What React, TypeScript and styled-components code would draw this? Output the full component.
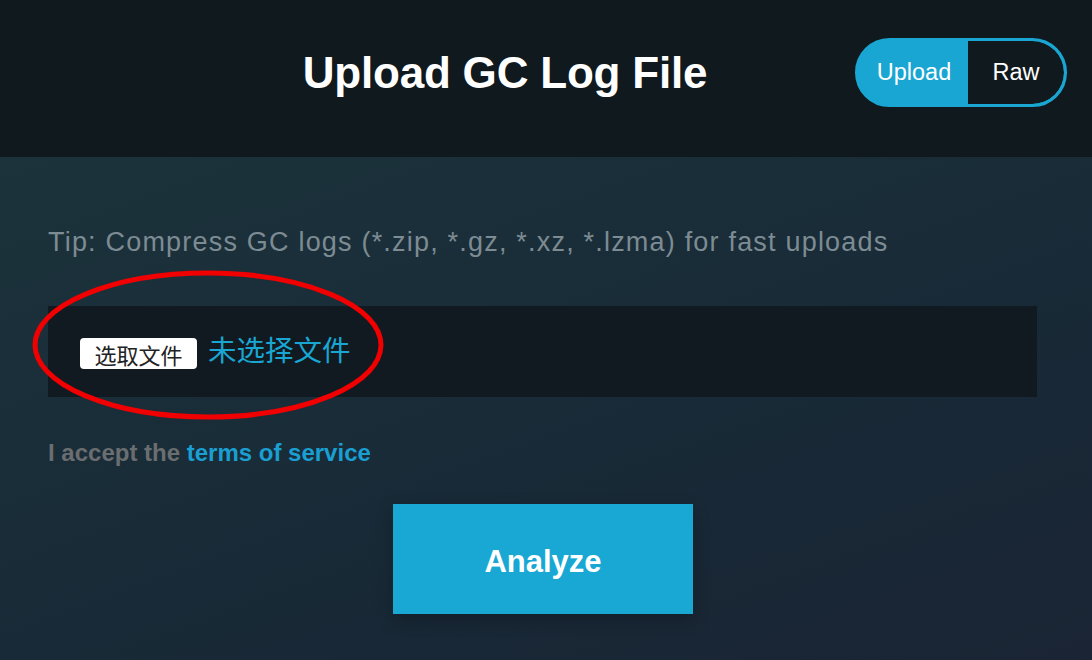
import React from "react";
import styled, { createGlobalStyle } from "styled-components";

const Global = createGlobalStyle`
  html, body { margin: 0; padding: 0; }
  body {
    width: 1092px;
    height: 660px;
    overflow: hidden;
    font-family: "Liberation Sans", Arial, sans-serif;
    background: #10191e;
  }
`;

const Page = styled.div`
  width: 1092px;
  height: 660px;
  display: flex;
  flex-direction: column;
`;

const Header = styled.header`
  height: 157px;
  flex: none;
  background: #10191e;
  display: grid;
  grid-template-columns: 1fr auto 1fr;
  align-items: center;
`;

const Title = styled.h1`
  grid-column: 2;
  margin: 0 0 12px 0;
  font-size: 44px;
  font-weight: 700;
  color: #ffffff;
  letter-spacing: -0.2px;
  transform: translateX(-41px);
`;

const ToggleWrap = styled.div`
  grid-column: 3;
  justify-self: end;
  margin-right: 25px;
  margin-bottom: 13px;
  display: flex;
  height: 63px;
  border: 3px solid #19a6d3;
  border-radius: 36px;
  overflow: hidden;
  background: #19a6d3;
`;

const ToggleItem = styled.div<{ $active?: boolean }>`
  width: ${(p) => (p.$active ? "108px" : "96px")};
  display: flex;
  align-items: center;
  justify-content: center;
  font-size: 23.5px;
  color: #ffffff;
  background: ${(p) => (p.$active ? "#19a6d3" : "#10191e")};
  border-radius: ${(p) => (p.$active ? "0" : "0 33px 33px 0")};
  padding-left: ${(p) => (p.$active ? "2px" : "0")};
`;

const Body = styled.main`
  flex: 1;
  background: linear-gradient(160deg, #1c333b 0%, #182a37 55%, #1a2434 100%);
  padding: 0 55px 0 48px;
  display: flex;
  flex-direction: column;
`;

const Tip = styled.p`
  margin: 67px 0 0 0;
  font-size: 27px;
  line-height: 37px;
  letter-spacing: 1.2px;
  color: #7d8b93;
`;

const FileArea = styled.div`
  position: relative;
  margin-top: 45px;
  height: 91px;
  background: #111a20;
  display: flex;
  align-items: center;
  padding-left: 32px;
  gap: 11px;
`;

const ChooseButton = styled.span`
  display: inline-flex;
  align-items: center;
  justify-content: center;
  width: 117px;
  height: 31px;
  margin-top: 4px;
  background: #ffffff;
  border-radius: 4px;
  font-family: "Noto Sans CJK SC", sans-serif;
  font-size: 22px;
  color: #222222;
`;

const NoFile = styled.span`
  font-family: "Noto Sans CJK SC", sans-serif;
  font-size: 28.5px;
  color: #19a6d3;
  margin-top: -6px;
`;

const Ellipse = styled.svg`
  position: absolute;
  left: -17px;
  top: -37px;
  width: 354px;
  height: 152px;
  overflow: visible;
  pointer-events: none;
`;

const Terms = styled.p`
  margin: 42px 0 0 0;
  font-size: 24px;
  font-weight: 700;
  color: #6b6e70;
`;

const TermsLink = styled.a`
  color: #1a9fd2;
  text-decoration: none;
`;

const AnalyzeRow = styled.div`
  display: flex;
  justify-content: center;
  margin-top: 37px;
  padding-left: 1px;
`;

const AnalyzeButton = styled.button`
  width: 300px;
  height: 110px;
  border: none;
  background: #19a7d4;
  color: #ffffff;
  font-family: "Liberation Sans", Arial, sans-serif;
  font-size: 31px;
  font-weight: 700;
  padding-top: 6px;
  box-shadow: 0 6px 16px rgba(0, 0, 0, 0.25);
  cursor: pointer;
`;

export default function App() {
  return (
    <>
      <Global />
      <Page>
        <Header>
          <Title>Upload GC Log File</Title>
          <ToggleWrap>
            <ToggleItem $active>Upload</ToggleItem>
            <ToggleItem>Raw</ToggleItem>
          </ToggleWrap>
        </Header>
        <Body>
          <Tip>Tip: Compress GC logs (*.zip, *.gz, *.xz, *.lzma) for fast uploads</Tip>
          <FileArea>
            <ChooseButton>选取文件</ChooseButton>
            <NoFile>未选择文件</NoFile>
            <Ellipse viewBox="0 0 354 152">
              <ellipse cx="177" cy="76" rx="173" ry="72" fill="none" stroke="#f00000" strokeWidth="5" />
            </Ellipse>
          </FileArea>
          <Terms>
            I accept the <TermsLink href="#">terms of service</TermsLink>
          </Terms>
          <AnalyzeRow>
            <AnalyzeButton>Analyze</AnalyzeButton>
          </AnalyzeRow>
        </Body>
      </Page>
    </>
  );
}
